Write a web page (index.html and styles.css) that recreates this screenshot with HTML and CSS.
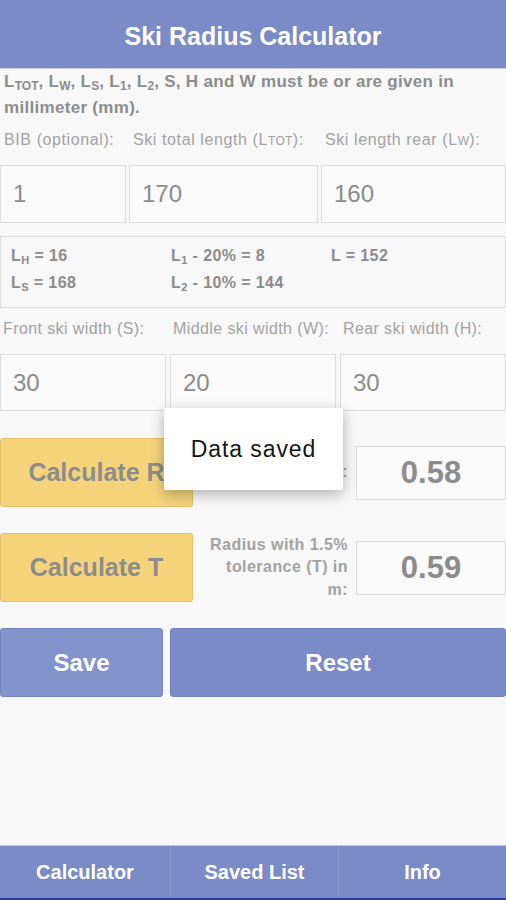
FILE: index.html
```html
<!DOCTYPE html>
<html lang="en">
<head>
    <meta charset="UTF-8">
    <meta name="viewport" content="width=device-width, initial-scale=1.0">
    <title>Ski Radius Calculator</title>
    <link rel="stylesheet" href="styles.css">
</head>
<body>
    <div class="app">
        <div class="header">
            <h1>Ski Radius Calculator</h1>
        </div>

        <div class="content">
            <p class="note">L<sub>TOT</sub>, L<sub>W</sub>, L<sub>S</sub>, L<sub>1</sub>, L<sub>2</sub>, S, H and W must be or are given in millimeter (mm).</p>

            <div class="field-row top-row">
                <label>BIB (optional):</label>
                <label>Ski total length (L<span class="sc">TOT</span>):</label>
                <label>Ski length rear (L<span class="sc">W</span>):</label>
                <div class="field">1</div>
                <div class="field">170</div>
                <div class="field">160</div>
            </div>

            <div class="info-box">
                <div>L<sub>H</sub> = 16</div>
                <div>L<sub>1</sub> - 20% = 8</div>
                <div>L = 152</div>
                <div>L<sub>S</sub> = 168</div>
                <div>L<sub>2</sub> - 10% = 144</div>
                <div></div>
            </div>

            <div class="field-row width-row">
                <label>Front ski width (S):</label>
                <label>Middle ski width (W):</label>
                <label>Rear ski width (H):</label>
                <div class="field">30</div>
                <div class="field">20</div>
                <div class="field">30</div>
            </div>

            <div class="result-row first">
                <button class="calc-btn">Calculate R</button>
                <div class="result-label">Radius (R) in m:</div>
                <div class="result-value">0.58</div>
            </div>

            <div class="result-row">
                <button class="calc-btn">Calculate T</button>
                <div class="result-label">Radius with 1.5% tolerance (T) in m:</div>
                <div class="result-value">0.59</div>
            </div>

            <div class="actions">
                <button class="save-btn">Save</button>
                <button class="reset-btn">Reset</button>
            </div>

            <div class="toast">Data saved</div>
        </div>

        <div class="tab-bar">
            <div class="tab">Calculator</div>
            <div class="tab">Saved List</div>
            <div class="tab">Info</div>
        </div>
    </div>
</body>
</html>
```

FILE: styles.css
```css
:root {
    --bar-blue: #7a8bc8;
    --save-blue: #8394cc;
    --page-bg: #f8f8f8;
    --field-bg: #fafafa;
    --border: #dcdcdc;
    --yellow: #f4d37b;
    --grey-text: #8c8c8c;
    --label-text: #a2a2a2;
}

* {
    margin: 0;
    padding: 0;
    box-sizing: border-box;
}

body {
    background-color: var(--page-bg);
    font-family: 'Liberation Sans', Arial, sans-serif;
}

.app {
    height: 900px;
    display: flex;
    flex-direction: column;
}

.header {
    height: 69px;
    background-color: var(--bar-blue);
    border-bottom: 1px solid #c9cde0;
    display: flex;
    align-items: center;
    justify-content: center;
}

.header h1 {
    color: white;
    font-size: 25px;
    font-weight: bold;
    padding-top: 4px;
}

.content {
    flex: 1;
    position: relative;
}

.note {
    padding: 0 4px;
    font-size: 17px;
    letter-spacing: 0.3px;
    font-weight: bold;
    line-height: 26px;
    color: var(--grey-text);
}

.note sub {
    font-size: 12px;
    vertical-align: -3px;
    line-height: 0;
    letter-spacing: 0;
}

.field-row {
    display: grid;
    column-gap: 3px;
}

.top-row {
    grid-template-columns: 126px 189px 1fr;
    margin-top: 9px;
}

.width-row {
    grid-template-columns: repeat(3, 1fr);
    column-gap: 4px;
    margin-top: 11px;
}

.field-row label {
    font-size: 16px;
    letter-spacing: 0.6px;
    line-height: 20px;
    color: var(--label-text);
    padding-left: 4px;
    margin-bottom: 14px;
    white-space: nowrap;
}

.width-row label {
    padding-left: 3px;
    margin-bottom: 15px;
    letter-spacing: 0.4px;
}

.sc {
    font-size: 12px;
    letter-spacing: 0.3px;
}

.field {
    height: 58px;
    border: 1px solid var(--border);
    background-color: var(--field-bg);
    font-size: 24px;
    color: var(--grey-text);
    display: flex;
    align-items: center;
    padding-left: 12px;
}

.width-row .field {
    height: 57px;
}

.info-box {
    margin-top: 13px;
    height: 72px;
    border: 1px solid var(--border);
    display: grid;
    grid-template-columns: 160px 160px 1fr;
    grid-auto-rows: 27px;
    padding: 10px 0 0 10px;
    font-size: 16px;
    letter-spacing: 0.4px;
    font-weight: bold;
    color: var(--grey-text);
}

.info-box sub {
    font-size: 11px;
    vertical-align: -3px;
    line-height: 0;
}

.result-row {
    display: flex;
    align-items: center;
    margin-top: 26px;
}

.result-row.first {
    margin-top: 27px;
}

button {
    font-family: inherit;
    border-radius: 3px;
    cursor: pointer;
}

.calc-btn {
    width: 193px;
    height: 69px;
    background-color: var(--yellow);
    border: 1px solid #e2c06a;
    color: var(--grey-text);
    font-size: 25px;
    font-weight: bold;
}

.result-label {
    flex: 1;
    text-align: right;
    padding: 0 8px 0 14px;
    font-size: 16px;
    letter-spacing: 0.45px;
    font-weight: bold;
    line-height: 22.5px;
    color: var(--label-text);
}

.result-value {
    width: 150px;
    height: 54px;
    border: 1px solid var(--border);
    background-color: var(--field-bg);
    display: flex;
    align-items: center;
    justify-content: center;
    font-size: 31px;
    font-weight: bold;
    color: var(--grey-text);
}

.actions {
    display: grid;
    grid-template-columns: 163px 1fr;
    gap: 7px;
    margin-top: 26px;
}

.actions button {
    height: 69px;
    border: 1px solid #7384c0;
    color: white;
    font-size: 24px;
    font-weight: bold;
}

.save-btn {
    background-color: var(--save-blue);
}

.reset-btn {
    background-color: var(--bar-blue);
}

.toast {
    position: absolute;
    left: 164px;
    top: 339px;
    width: 179px;
    height: 82px;
    background-color: white;
    border-radius: 2px;
    box-shadow: 0 4px 14px rgba(0,0,0,0.3);
    display: flex;
    align-items: center;
    justify-content: center;
    font-size: 23px;
    letter-spacing: 0.9px;
    color: #151515;
}

.tab-bar {
    height: 55px;
    display: grid;
    grid-template-columns: 170px 168px 1fr;
    background-color: var(--bar-blue);
    border-top: 1px solid #c4c8d8;
    border-bottom: 2px solid #2b3c98;
}

.tab {
    display: flex;
    align-items: center;
    justify-content: center;
    color: white;
    font-size: 20px;
    font-weight: bold;
    border-left: 1px solid #8797cf;
}

.tab:first-child {
    border-left: none;
}
```
